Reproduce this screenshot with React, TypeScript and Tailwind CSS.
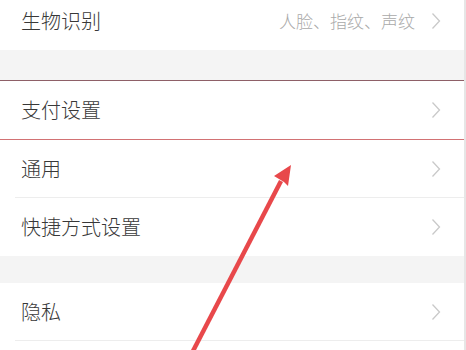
import React from 'react';

const Chevron = () => (
    <svg width="10" height="18" viewBox="0 0 10 18" className="shrink-0">
        <path d="M1.5 1.5 L8.5 9 L1.5 16.5" fill="none" stroke="#c9c9c9" strokeWidth="1.3" />
    </svg>
);

const Row: React.FC<{ label: string, value?: string, divider?: boolean }> = ({ label, value, divider }) => (
    <div className="h-[58px] flex items-center pl-[21px] pr-[23px] bg-white relative">
        <span className="flex-1 text-[20px] text-[#383838] font-light">{label}</span>
        {value && <span className="text-[17px] text-[#a9a9a9] mr-[16px] font-light">{value}</span>}
        <Chevron />
        {divider && <div className="absolute left-[15px] right-0 bottom-0 h-px bg-[#ededed]" />}
    </div>
);

export default function App() {
    return (
        <div
            className="relative w-[466px] h-[350px] overflow-hidden bg-white border-r-2 border-[#e6e6e6]"
            style={{ fontFamily: '"Noto Sans CJK SC", "Noto Sans", sans-serif' }}
        >
            <div className="-mt-[8px]">
                <Row label="生物识别" value="人脸、指纹、声纹" />
                <div className="h-[30px] bg-[#f4f4f4]" />
                <div className="h-px bg-[#8e6067]" />
                <Row label="支付设置" />
                <div className="h-px bg-[#d27274]" />
                <Row label="通用" divider />
                <Row label="快捷方式设置" />
                <div className="h-[27px] bg-[#f4f4f4]" />
                <Row label="隐私" divider />
            </div>

            {/* annotation arrow */}
            <svg className="absolute inset-0 pointer-events-none" width="466" height="350" viewBox="0 0 466 350">
                <path d="M192 352 L191 350 L279 180 L283 182 L195 352 Z" fill="#e8484b" />
                <path d="M291 165 L274 176 L279 179 L284 182 L288 186 Z" fill="#e8484b" />
            </svg>
        </div>
    );
}
